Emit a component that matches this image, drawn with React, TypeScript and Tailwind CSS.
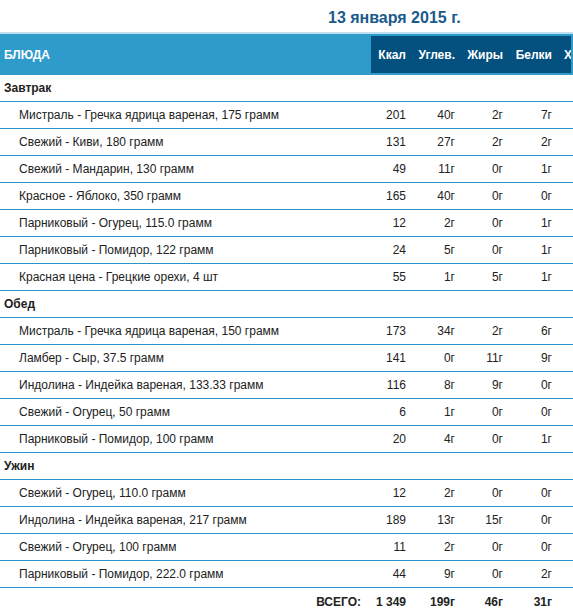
type Item = { name: string; kcal: string; carbs: string; fat: string; protein: string };
type Meal = { title: string; items: Item[] };

const meals: Meal[] = [
  {
    title: "Завтрак",
    items: [
      { name: "Мистраль - Гречка ядрица вареная, 175 грамм", kcal: "201", carbs: "40г", fat: "2г", protein: "7г" },
      { name: "Свежий - Киви, 180 грамм", kcal: "131", carbs: "27г", fat: "2г", protein: "2г" },
      { name: "Свежий - Мандарин, 130 грамм", kcal: "49", carbs: "11г", fat: "0г", protein: "1г" },
      { name: "Красное - Яблоко, 350 грамм", kcal: "165", carbs: "40г", fat: "0г", protein: "0г" },
      { name: "Парниковый - Огурец, 115.0 грамм", kcal: "12", carbs: "2г", fat: "0г", protein: "1г" },
      { name: "Парниковый - Помидор, 122 грамм", kcal: "24", carbs: "5г", fat: "0г", protein: "1г" },
      { name: "Красная цена - Грецкие орехи, 4 шт", kcal: "55", carbs: "1г", fat: "5г", protein: "1г" },
    ],
  },
  {
    title: "Обед",
    items: [
      { name: "Мистраль - Гречка ядрица вареная, 150 грамм", kcal: "173", carbs: "34г", fat: "2г", protein: "6г" },
      { name: "Ламбер - Сыр, 37.5 грамм", kcal: "141", carbs: "0г", fat: "11г", protein: "9г" },
      { name: "Индолина - Индейка вареная, 133.33 грамм", kcal: "116", carbs: "8г", fat: "9г", protein: "0г" },
      { name: "Свежий - Огурец, 50 грамм", kcal: "6", carbs: "1г", fat: "0г", protein: "0г" },
      { name: "Парниковый - Помидор, 100 грамм", kcal: "20", carbs: "4г", fat: "0г", protein: "1г" },
    ],
  },
  {
    title: "Ужин",
    items: [
      { name: "Свежий - Огурец, 110.0 грамм", kcal: "12", carbs: "2г", fat: "0г", protein: "0г" },
      { name: "Индолина - Индейка вареная, 217 грамм", kcal: "189", carbs: "13г", fat: "15г", protein: "0г" },
      { name: "Свежий - Огурец, 100 грамм", kcal: "11", carbs: "2г", fat: "0г", protein: "0г" },
      { name: "Парниковый - Помидор, 222.0 грамм", kcal: "44", carbs: "9г", fat: "0г", protein: "2г" },
    ],
  },
];

function Cells({ kcal, carbs, fat, protein }: { kcal: string; carbs: string; fat: string; protein: string }) {
  return (
    <>
      <div className="w-[41px] shrink-0 text-right pr-[6px]">{kcal}</div>
      <div className="w-[49px] shrink-0 text-right pr-[6px]">{carbs}</div>
      <div className="w-[48px] shrink-0 text-right pr-[6px]">{fat}</div>
      <div className="w-[49px] shrink-0 text-right pr-[6px]">{protein}</div>
      <div className="w-[90px] shrink-0" />
    </>
  );
}

export default function App() {
  return (
    <div
      className="w-full min-h-[615px] overflow-hidden bg-white text-[12px] text-[#222]"
      style={{ fontFamily: '"Liberation Sans", Arial, sans-serif' }}
    >
      <div className="w-[700px]">
        <div className="h-[32px] pl-[328px] pt-[9px] text-[16px] leading-[18px] font-bold text-[#1b5a8c]">
          13 января 2015 г.
        </div>
        <div className="h-[2px] bg-[#bfe0f0]" />
        <div className="h-[41px] bg-[#2e9bcb] flex items-center">
          <div className="w-[371px] shrink-0 pl-[4px] font-bold text-white">БЛЮДА</div>
          <div className="h-[37px] flex items-center bg-[#04507f] font-bold text-white w-[200px] overflow-hidden">
            <div className="w-[41px] shrink-0 text-right pr-[6px]">Ккал</div>
            <div className="w-[49px] shrink-0 text-right pr-[6px]">Углев.</div>
            <div className="w-[48px] shrink-0 text-right pr-[6px]">Жиры</div>
            <div className="w-[49px] shrink-0 text-right pr-[6px]">Белки</div>
            <div className="shrink-0 pl-[6px] whitespace-nowrap">Холестерин</div>
          </div>
        </div>

        {meals.map((meal) => (
          <div key={meal.title}>
            <div className="h-[27px] flex items-center border-b border-[#2a94c9] pl-[4px] font-bold">
              {meal.title}
            </div>
            {meal.items.map((item, i) => (
              <div key={i} className="h-[27px] flex items-center border-b border-[#2a94c9]">
                <div className="w-[371px] shrink-0 pl-[19px] whitespace-nowrap">{item.name}</div>
                <Cells kcal={item.kcal} carbs={item.carbs} fat={item.fat} protein={item.protein} />
              </div>
            ))}
          </div>
        ))}

        <div className="h-[27px] flex items-center font-bold">
          <div className="w-[371px] shrink-0 text-right pr-[10px]">ВСЕГО:</div>
          <Cells kcal="1 349" carbs="199г" fat="46г" protein="31г" />
        </div>
      </div>
    </div>
  );
}
